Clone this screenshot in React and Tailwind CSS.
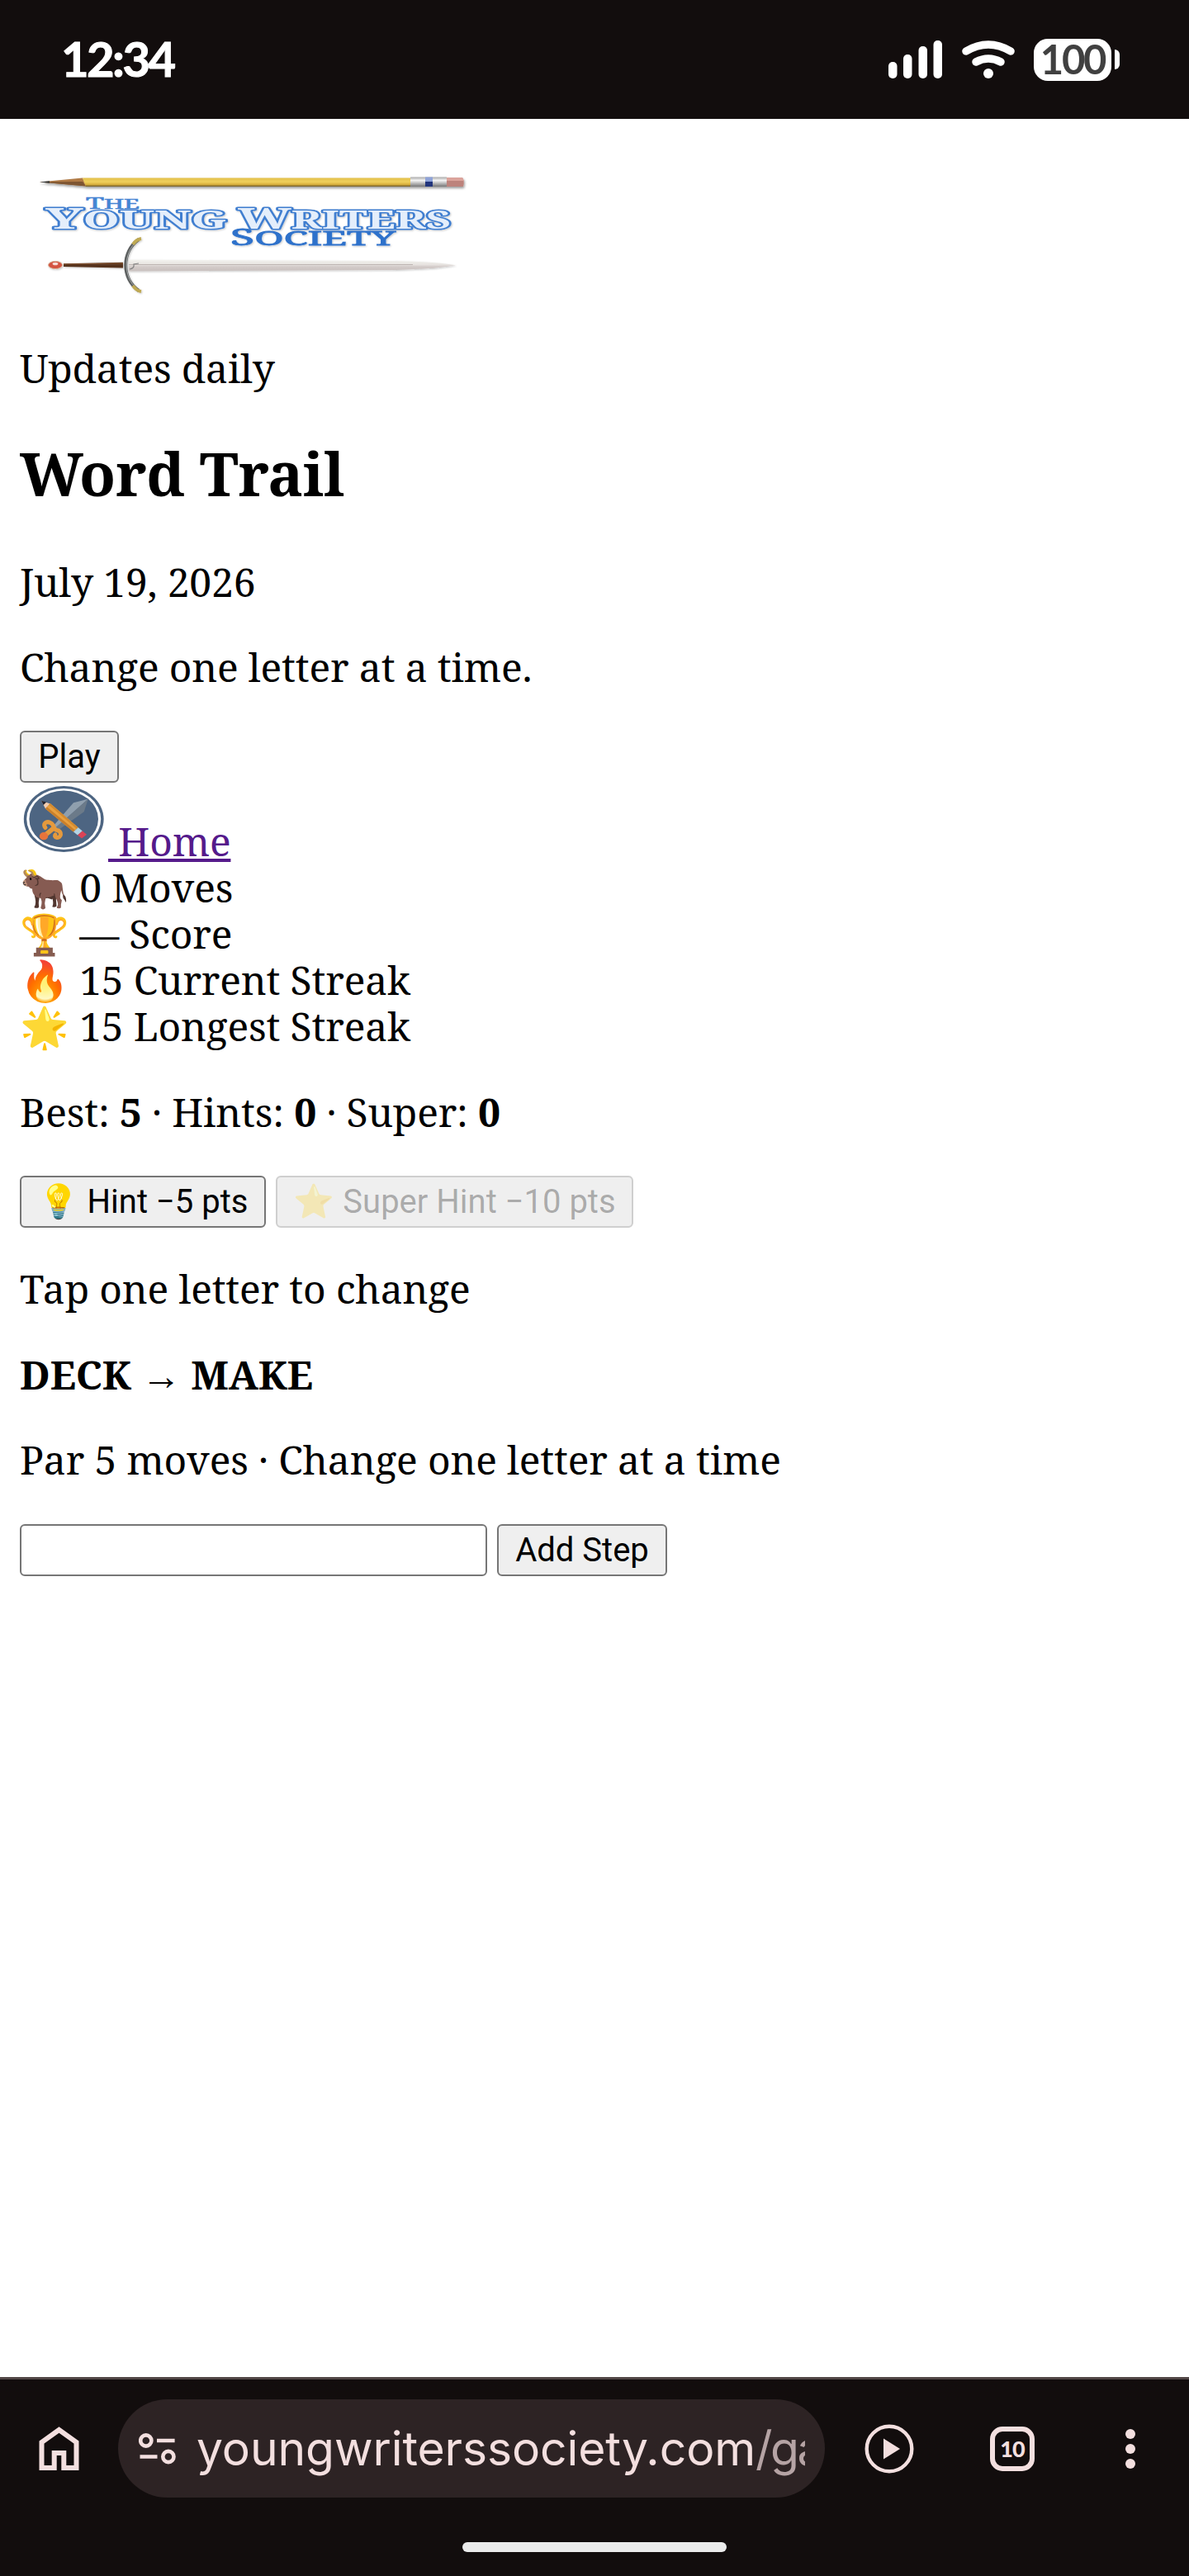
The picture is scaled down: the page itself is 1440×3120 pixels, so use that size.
const stats = [
    { icon: "🐂", value: "0", label: "Moves" },
    { icon: "🏆", value: "—", label: "Score" },
    { icon: "🔥", value: "15", label: "Current Streak" },
    { icon: "🌟", value: "15", label: "Longest Streak" },
]

export default function App() {
    return (
        <div className="flex h-[3120px] w-[1440px] flex-col overflow-hidden bg-white text-black">
            <StatusBar />
            <main className="flex-1 px-6 pt-[46px] font-['Noto_Serif',serif] text-[48px] leading-[56px] tracking-[-0.17px]">
                <SiteLogo />
                <p className="mt-[38px]">Updates daily</p>
                <h1 className="mt-[57px] text-[72px] leading-[84px] font-bold tracking-[-0.4px]">Word Trail</h1>
                <p className="mt-[62px]">July 19, 2026</p>
                <p className="mt-[47px]">Change one letter at a time.</p>
                <div className="mt-[49px] flex">
                    <Button className="w-[120px]">Play</Button>
                </div>
                <a href="#" className="flex h-[99px] w-fit items-end text-[#551a8b]">
                    <Badge />
                    <span className="whitespace-pre underline decoration-[4px] underline-offset-[3px]">{"\u00a0Home"}</span>
                </a>
                {stats.map((stat) => (
                    <div key={stat.label}>{stat.icon} {stat.value} {stat.label}</div>
                ))}
                <p className="mt-12">Best: <b>5</b> · Hints: <b>0</b> · Super: <b>0</b></p>
                <div className="mt-[49px] flex gap-3">
                    <Button className="w-[298px]">💡 Hint −5 pts</Button>
                    <Button className="w-[433px]" disabled>⭐ Super Hint −10 pts</Button>
                </div>
                <p className="mt-[46px]">Tap one letter to change</p>
                <p className="mt-12 font-bold">DECK → MAKE</p>
                <p className="mt-[47px]">Par 5 moves · Change one letter at a time</p>
                <form className="mt-[50px] flex gap-3" onSubmit={(e) => e.preventDefault()}>
                    <input className="h-[63px] w-[566px] rounded-[6px] border-2 border-[#767676] bg-white px-2 font-['Roboto',sans-serif] text-[40px]" />
                    <Button className="w-[206px]">Add Step</Button>
                </form>
            </main>
            <BrowserBar />
        </div>
    )
}

function Button({ className, disabled, children }) {
    return (
        <button
            disabled={disabled}
            className={`flex h-[63px] items-center justify-center rounded-[6px] border-2 border-[#767676] bg-[#efefef] font-['Roboto',sans-serif] text-[40px] leading-[47px] tracking-normal whitespace-nowrap disabled:border-[#cfcfcf] disabled:text-black/30 ${className}`}
        >
            {children}
        </button>
    )
}

function StatusBar() {
    return (
        <header className="flex h-36 items-center justify-between bg-[#120d0d] pr-[84px] pl-[74px] font-['Lato',sans-serif] font-bold text-white">
            <span className="pb-[3px] text-[58px] tracking-[-2.6px] [-webkit-text-stroke:1px_white]">12:34</span>
            <div className="flex items-center">
                <svg width="65" height="46" viewBox="0 0 65 46" fill="currentColor">
                    <rect x="0" y="26" width="10.5" height="20" rx="5" />
                    <rect x="18" y="17" width="10.5" height="29" rx="5" />
                    <rect x="36.5" y="7" width="10.5" height="39" rx="5" />
                    <rect x="54.5" y="0" width="10.5" height="46" rx="5" />
                </svg>
                <svg width="64" height="46" viewBox="0 0 64 46" fill="none" stroke="currentColor" strokeLinecap="round" className="ml-6">
                    <path d="M5 13Q32 -3 59 13" strokeWidth="9.5" />
                    <path d="M17 26Q32 18 47 26" strokeWidth="9.5" />
                    <circle cx="32" cy="40" r="6" fill="currentColor" stroke="none" />
                </svg>
                <div className="ml-[23px] flex h-[51px] w-[94px] items-center justify-center rounded-[17px] bg-white pb-[2px] text-[49px] leading-none tracking-[-2.3px] text-[#404040]">
                    100
                </div>
                <div className="ml-1 h-6 w-[6px] rounded-r-[6px] bg-white" />
            </div>
        </header>
    )
}

function SiteLogo() {
    return (
        <svg width="560" height="190" viewBox="24 190 560 190" className="block">
            <defs>
                <linearGradient id="pencil" x1="0" y1="0" x2="0" y2="1">
                    <stop offset="0" stopColor="#e3c04a" />
                    <stop offset=".45" stopColor="#efcf5c" />
                    <stop offset=".75" stopColor="#d9b03c" />
                    <stop offset="1" stopColor="#6d5a2a" />
                </linearGradient>
                <linearGradient id="ferrule" x1="0" y1="0" x2="0" y2="1">
                    <stop offset="0" stopColor="#a9a9a9" />
                    <stop offset=".35" stopColor="#f4f4f4" />
                    <stop offset="1" stopColor="#777" />
                </linearGradient>
                <linearGradient id="blade" x1="0" y1="0" x2="0" y2="1">
                    <stop offset="0" stopColor="#f3f3ef" />
                    <stop offset=".45" stopColor="#e6e2df" />
                    <stop offset=".6" stopColor="#d3cbc9" />
                    <stop offset="1" stopColor="#c8c0be" />
                </linearGradient>
                <filter id="shade" x="-5%" y="-40%" width="110%" height="220%">
                    <feDropShadow dx="1" dy="2" stdDeviation="1.4" floodColor="#000" floodOpacity=".4" />
                </filter>
                <filter id="softshade" x="-5%" y="-40%" width="110%" height="220%">
                    <feDropShadow dx="1" dy="1" stdDeviation="1" floodColor="#000" floodOpacity=".22" />
                </filter>
            </defs>

            <g filter="url(#shade)">
                <path d="M48 220.5L100 215.5L104 225.5Z" fill="#b07a45" />
                <path d="M48 220.5L100 220L104 225.5Z" fill="#7d5430" />
                <path d="M48 220.5L60 219.2V221.8Z" fill="#33383a" />
                <path d="M100 215.5H497V226H104Z" fill="url(#pencil)" />
                <rect x="497" y="214.5" width="44" height="11.5" fill="url(#ferrule)" />
                <rect x="515" y="214.5" width="9" height="6" fill="#8fa3d8" />
                <rect x="515" y="220" width="9" height="6" fill="#22347c" />
                <path d="M541 215H560Q563 220 561 226H541Z" fill="#bd837b" />
                <path d="M541 215H560L562 219H541Z" fill="#dba39b" />
            </g>

            <g fontFamily="Noto Serif, serif" letterSpacing="0">
                <text x="104" y="253" fontSize="20" textLength="65" lengthAdjust="spacingAndGlyphs" fill="#4584d3" stroke="#4584d3" strokeWidth=".6">
                    T<tspan fontSize="17">HE</tspan>
                </text>
                <g fill="#e4eefb" stroke="#3f7ed0" strokeWidth="3.2" strokeLinejoin="round" paintOrder="stroke" fontWeight="bold" filter="url(#softshade)">
                    <text x="55" y="276.5" fontSize="35" textLength="220" lengthAdjust="spacingAndGlyphs">Y<tspan fontSize="30">OUNG</tspan></text>
                    <text x="288" y="276.5" fontSize="35" textLength="258" lengthAdjust="spacingAndGlyphs">W<tspan fontSize="30">RITERS</tspan></text>
                </g>
                <text x="279" y="297" fontSize="27" textLength="200" lengthAdjust="spacingAndGlyphs" fill="#2f72cb" stroke="#2f72cb" strokeWidth=".8" filter="url(#softshade)">
                    S<tspan fontSize="24">OCIETY</tspan>
                </text>
            </g>

            <g filter="url(#softshade)">
                <path d="M156 314.5L480 316Q525 317 552 321.3Q525 326 480 327L156 328.5Z" fill="url(#blade)" />
                <path d="M156 320.5H500" stroke="#b3a9a6" strokeWidth=".8" />
                <path d="M77 319.2L149 317.8V324.6L77 323Z" fill="#54301a" />
                <path d="M77 320L149 319" stroke="#8a5a36" strokeWidth="1" />
                <ellipse cx="67" cy="321" rx="8.5" ry="4.6" fill="#d4523f" stroke="#d9b49a" strokeWidth="1" />
                <ellipse cx="67" cy="319.5" rx="3.4" ry="1.8" fill="#f6dcd6" />
                <path d="M168 290C147 305 147 337 168 352" fill="none" stroke="#5b5e5e" strokeWidth="4" />
                <path d="M166 292C149 306 149 336 166 350" fill="none" stroke="#a4a8a8" strokeWidth="1" />
                <path d="M161 296Q165 290 171 289M161 346Q165 352 171 353" fill="none" stroke="#bfa953" strokeWidth="4" />
                <path d="M157 326Q163 325 162 320L168 319" fill="none" stroke="#858585" strokeWidth="1.2" />
            </g>
        </svg>
    )
}

function Badge() {
    return (
        <svg width="107" height="99" viewBox="0 0 107 99" className="shrink-0">
            <ellipse cx="53.2" cy="44" rx="48.4" ry="40" fill="#4d6582" />
            <ellipse cx="53.2" cy="44" rx="45" ry="37" fill="#fff" />
            <ellipse cx="53.2" cy="44" rx="41.8" ry="34.5" fill="#4d6582" />
            <path d="M82.7 19.7L65 24.3L40 53L43.5 55Z" fill="#8f9fae" />
            <path d="M82.7 19.7L77.7 35.3L47 57L43 54.5Z" fill="#6b7a89" />
            <path d="M31 54.5C27 50 32 46 37 48.5C43 51 39 56 45 57.5C52 59 50 67 45 66.5C42 66 42 64 43 63" fill="none" stroke="#e69a3d" strokeWidth="5" strokeLinecap="round" />
            <path d="M41 55L30 64" stroke="#e69a3d" strokeWidth="5.5" />
            <ellipse cx="29" cy="64.7" rx="5.2" ry="4.6" fill="#e8743b" />
            <path d="M26 21.7L36.7 25.5L31 31.5Z" fill="#f3cdb0" />
            <path d="M26 21.7L32.2 23.6L28.6 27Z" fill="#23242f" />
            <path d="M36.7 25L70.7 54.3L65 59.5L31 31.5Z" fill="#e9a03f" />
            <path d="M33 29.5L67 57.6L65 59.5L31 31.5Z" fill="#c97f2b" />
            <path d="M36.7 25L70.7 54.3L69 56L35 26.8Z" fill="#d48b30" />
            <path d="M70.7 54.3L75.8 58.6L70 63.6L65 59.5Z" fill="#b3d3e4" />
            <path d="M75.8 58.6L81 62.8L75 67.5L70 63.6Z" fill="#dc4356" />
        </svg>
    )
}

function BrowserBar() {
    return (
        <footer className="flex h-[241px] flex-col items-center border-t-[3px] border-[#524746] bg-[#120d0d] text-[#f3dfdf]">
            <div className="mt-6 flex h-[119px] w-full items-center pr-[65px] pl-[47px]">
                <svg width="49" height="53" viewBox="0 0 48 53" fill="none" stroke="currentColor" strokeWidth="6">
                    <path d="M3 50V19L24 4L45 19V50H29.8V32H18.2V50Z" />
                </svg>
                <div className="ml-[47px] flex h-full w-[856px] items-center rounded-full bg-[#2d2324] pl-[25px]">
                    <svg width="46" height="40" viewBox="0 0 46 40" fill="none" stroke="currentColor" strokeWidth="4.6" className="shrink-0">
                        <circle cx="8.8" cy="10" r="6.6" />
                        <path d="M22 10H43.6M1.5 29.5H22.5" />
                        <circle cx="35.9" cy="29.5" r="6.6" />
                    </svg>
                    <div className="ml-[24px] w-[737px] overflow-hidden font-['Inter',sans-serif] text-[57px] leading-[80px] tracking-[-0.1px] whitespace-nowrap">
                        youngwriterssociety.com<span className="tracking-[-2.5px] text-[#b5a3a4]">/ga</span>
                    </div>
                </div>
                <svg width="60" height="60" viewBox="0 0 60 60" fill="none" className="ml-[48px]">
                    <circle cx="30" cy="30" r="27.3" stroke="currentColor" strokeWidth="4.4" />
                    <path d="M23 17.5V42.5L43 30Z" fill="currentColor" />
                </svg>
                <div className="ml-[92px] flex h-[54px] w-[54px] items-center justify-center rounded-[15px] border-[6px] border-current font-['Lato',sans-serif] text-[27px] leading-none font-black tracking-[-1px]">
                    10
                </div>
                <div className="ml-auto flex flex-col gap-[6px]">
                    <span className="size-3 rounded-full bg-current" />
                    <span className="size-3 rounded-full bg-current" />
                    <span className="size-3 rounded-full bg-current" />
                </div>
            </div>
            <div className="mt-[54px] h-3 w-[320px] rounded-full bg-[#ebebeb]" />
        </footer>
    )
}
